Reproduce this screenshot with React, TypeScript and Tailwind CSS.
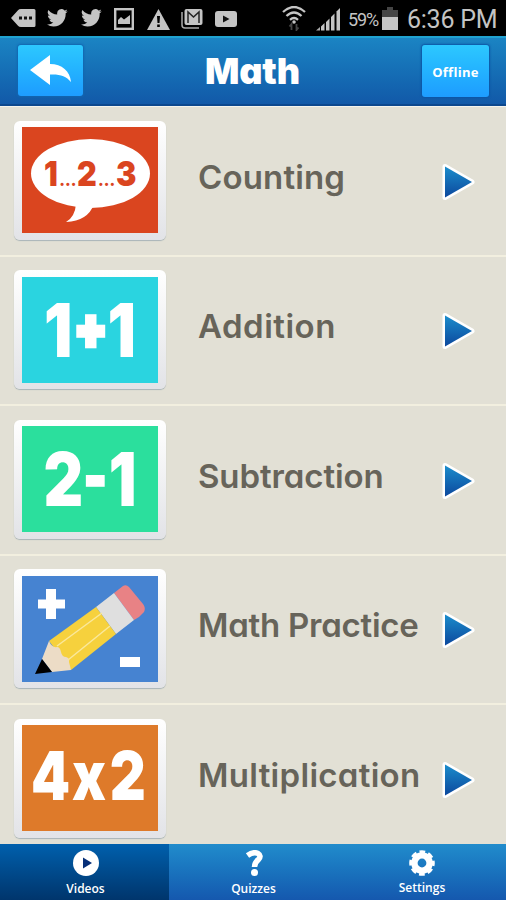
import type { ReactNode } from "react";

interface Lesson {
  title: string;
  tracking: string;
  art: ReactNode;
}

const TwitterIcon = () => (
  <svg width="21" height="18" viewBox="0 0 24 20" preserveAspectRatio="none">
    <path
      fill="#c4c4c4"
      d="M23.6 2.4a9.500 9.500 0 0 1-2.700.8 4.800 4.800 0 0 0 2.100-2.700 9.800 9.800 0 0 1-3 1.200A4.850 4.850 0 0 0 11.700 6 13.700 13.700 0 0 1 1.700 1a4.800 4.800 0 0 0 1.500 6.500 4.800 4.800 0 0 1-2.200-.6c0 2.300 1.600 4.300 3.900 4.800a4.900 4.900 0 0 1-2.200.1 4.850 4.850 0 0 0 4.500 3.300A9.700 9.700 0 0 1 0 17.200a13.700 13.700 0 0 0 7.500 2.200c9.100 0 14.300-7.700 13.800-14.600a9.800 9.800 0 0 0 2.300-2.400z"
    />
  </svg>
);

const StatusBar = () => (
  <div className="flex h-9 shrink-0 items-center bg-black pl-[11px] font-['Roboto',sans-serif] text-[#c4c4c4]">
    <svg width="25" height="18" viewBox="0 0 25 18">
      <path fill="#c4c4c4" d="M0 9 7 1.200Q8 0 10 0H23q1.500 0 1.500 1.500v15Q24.500 18 23 18H10q-2 0-3-1.200z" />
      <path fill="#111" d="M8 7.500h3v3H8zM13 7.500h3v3h-3zM18 7.500h3v3h-3z" />
    </svg>
    <div className="ml-[11px] flex gap-[13px]">
      <TwitterIcon />
      <TwitterIcon />
    </div>
    <svg className="mt-[1px] ml-[12px]" width="20" height="22" viewBox="0 0 20 22">
      <rect x="1.200" y="1.200" width="17.600" height="19.600" fill="none" stroke="#c4c4c4" strokeWidth="2.400" />
      <path fill="#c4c4c4" d="M4 16v-4l3-3 3 2.500L16 7v9z" />
    </svg>
    <svg className="mt-[2px] ml-[13px]" width="23" height="21" viewBox="0 0 23 21">
      <path fill="#c4c4c4" d="M11.500 0 23 21H0z" />
      <path fill="#000" d="M10 7h3l-.5 7h-2zM10.200 15.500h2.600V18h-2.600z" />
    </svg>
    <svg className="mt-[1px] ml-[11px]" width="22" height="20" viewBox="0 0 22 20">
      <path fill="none" stroke="#aaa" strokeWidth="1.500" d="M1 3v13q0 3 3 3h14" />
      <rect x="3.500" y="0" width="18" height="16" rx="2" fill="#c4c4c4" />
      <path fill="none" stroke="#222" strokeWidth="1.500" d="M7 14V3l5.500 5L18 3v11" />
    </svg>
    <svg className="mt-[1px] ml-[12px]" width="22" height="16" viewBox="0 0 22 16">
      <rect width="22" height="16" rx="3" fill="#c4c4c4" />
      <path fill="#111" d="m8 4.500 6.500 3.500L8 11.500z" />
    </svg>
    <svg className="ml-[45px]" width="24" height="25" viewBox="0 0 24 25" fill="none" stroke="#c4c4c4" strokeWidth="2.300">
      <path d="M1 6q11-10 22 0M4.500 10q7.500-7 15 0M8 13.800q4-3.600 8 0" />
      <circle cx="12" cy="16" r="1.800" fill="#c4c4c4" stroke="none" />
      <path stroke="#454545" strokeWidth="1.800" d="M9.500 24v-6l-2 2.500M14.500 18v6l2-2.500" />
    </svg>
    <svg className="mt-[2px] ml-[10px]" width="25" height="23" viewBox="0 0 25 23" fill="#c4c4c4">
      <path fill="#aaa" d="M0 22.500 4 19v3.500z" />
      <path d="M5 18.500 8.500 15v7.500H5zM10 14l3.500-3.500v12H10zM15 9l3.500-3.500v17H15z" />
      <path d="M20.500 3.500 24 0v22.500h-3.500z" />
    </svg>
    <span className="mt-[4px] ml-[7px] w-[32px] whitespace-nowrap text-[18px] leading-none tracking-[-1.1px]">59%</span>
    <svg className="ml-[2px]" width="16" height="23" viewBox="0 0 16 23">
      <path fill="#454545" d="M5 0h6v3h5v8H0V3h5z" />
      <path fill="#c4c4c4" d="M0 10h16v13H0z" />
    </svg>
    <span className="mt-[3px] ml-[9px] whitespace-nowrap text-[25px] leading-none tracking-[-0.25px]">6:36 PM</span>
  </div>
);

const Header = () => (
  <header className="flex h-[70px] shrink-0 items-center justify-between border-t-2 border-b-2 border-t-[#20a2d0] border-b-[#0c488e] bg-linear-to-b from-[#1b84c3] to-[#1259a8] pr-[17px] pl-[18px]">
    <button className="mb-[2px] flex h-[51px] w-[65px] items-center justify-center rounded-[3px] bg-linear-to-b from-[#2dc8ff] to-[#1e9cff] shadow-[0_0_2px_1px_#1266b0]">
      <svg width="41" height="30" viewBox="0 0 41 30" fill="#fff">
        <path d="M0 15 20 0v9c12 0 20 7 21 18-5-6-11-8-21-7.500V30z" />
      </svg>
    </button>
    <h1 className="mb-[1px] font-['Inter',sans-serif] text-[36px] leading-none font-black tracking-[-0.1px] text-white [font-feature-settings:'cv11']">
      Math
    </h1>
    <button className="flex h-[52px] w-[67px] items-center justify-center rounded-[3px] bg-linear-to-b from-[#2dc8ff] to-[#1e9cff] pt-[3px] font-['Open_Sans',sans-serif] text-[13px] font-bold tracking-[0.3px] text-white shadow-[0_0_2px_1px_#0c55a4]">
      Offline
    </button>
  </header>
);

const artText = "font-['Inter',sans-serif] font-black";

const CountingArt = () => (
  <svg className="bg-[#da451f]" width="136" height="106" viewBox="0 0 136 106">
    <ellipse cx="68.500" cy="46.500" rx="59.500" ry="34.500" fill="#fff" />
    <path fill="#fff" d="M54 77q-1 13-10 18 22-1 28-18z" />
    <g className={artText} fill="#da451f" fontSize="34" transform="translate(0 59) scale(.9 1)">
      <text x="24.500">1</text>
      <text x="41.500" fontSize="17">...</text>
      <text x="61">2</text>
      <text x="84.500" fontSize="17">...</text>
      <text x="104.500">3</text>
    </g>
  </svg>
);

const AdditionArt = () => (
  <svg className="bg-[#2ad4e0]" width="136" height="106" viewBox="0 0 136 106">
    <g className={artText} fill="#fff" fontSize="74" transform="translate(0 80) scale(.85 1)">
      <text x="26">1</text>
      <text x="61.500" y="-9" fontSize="56" stroke="#fff" strokeWidth="4.500">+</text>
      <text x="100.500">1</text>
    </g>
  </svg>
);

const SubtractionArt = () => (
  <svg className="bg-[#2bdf9d]" width="136" height="106" viewBox="0 0 136 106">
    <g className={artText} fill="#fff" fontSize="74" transform="translate(0 80) scale(.83 1)">
      <text x="26">2</text>
      <text x="75" y="-9.500" fontSize="56" stroke="#fff" strokeWidth="3.500">-</text>
      <text x="104.500">1</text>
    </g>
  </svg>
);

const PracticeArt = () => (
  <svg className="bg-[#4683d1]" width="136" height="106" viewBox="0 0 136 106">
    <path fill="#fff" d="M24 13h10v10.500h9v9h-9V43H24V32.500h-8v-9h8zM98 81h20v10H98z" />
    <path fill="#e88285" d="m92 17 9-7q3-2 6 1l14 17q3 4 1 8-4 5-10 8z" />
    <path fill="#dfdfdf" d="m74 31 18-14 20 27-18 14z" />
    <path fill="#f6d13d" d="m27 65 47-34 20 27-45 36z" />
    <path fill="#ecdcc6" d="M27 65q3 7 8 6 3 0 4 5 1 5 5 5 4 1 3 5l2 8-19 2-10-13z" />
    <path fill="none" stroke="#fae89b" strokeWidth="1.500" d="M35 70 80 37M46 84 88 50" />
    <path fill="#000" d="m20 83 10 13-17 2z" />
  </svg>
);

const MultiplicationArt = () => (
  <svg className="bg-[#de7a2a]" width="136" height="106" viewBox="0 0 136 106">
    <g className={artText} fill="#fff" fontSize="68" transform="translate(0 74.500) scale(.82 1)">
      <text x="11">4</text>
      <text x="61">x</text>
      <text x="107">2</text>
    </g>
  </svg>
);

const lessons: Lesson[] = [
  { title: "Counting", tracking: "tracking-[0.15px]", art: <CountingArt /> },
  { title: "Addition", tracking: "tracking-[0.5px]", art: <AdditionArt /> },
  { title: "Subtraction", tracking: "tracking-[-0.1px]", art: <SubtractionArt /> },
  { title: "Math Practice", tracking: "tracking-[-0.25px]", art: <PracticeArt /> },
  { title: "Multiplication", tracking: "tracking-[0.3px]", art: <MultiplicationArt /> },
];

const LessonRow = ({ title, tracking, art }: Lesson) => (
  <li className="flex h-[149.5px] shrink-0 items-start border-b-2 border-[#f2efdf] pt-[13.5px] pl-[14px]">
    <div className="flex h-[119px] w-[152px] justify-center rounded-[6px] bg-linear-to-b from-white to-[#e2e3e7] pt-[6.5px] shadow-[0_1px_1px_#a9b4b8]">
      {art}
    </div>
    <span
      className={`mt-[36px] ml-8 w-[246px] font-['Inter',sans-serif] text-[33px] leading-[40px] font-semibold whitespace-nowrap text-[#67645a] [font-feature-settings:'cv11'] ${tracking}`}
    >
      {title}
    </span>
    <svg className="mt-[41px] -ml-[2px]" width="35" height="40" viewBox="0 0 35 40">
      <defs>
        <linearGradient id="arrow" x1="0" y1="0" x2="0" y2="1">
          <stop offset="0" stopColor="#1b8dcc" />
          <stop offset="1" stopColor="#0c489d" />
        </linearGradient>
      </defs>
      <path
        d="M3 4.500v31L30 20z"
        fill="url(#arrow)"
        stroke="#fff"
        strokeWidth="5"
        strokeLinejoin="round"
        paintOrder="stroke"
      />
    </svg>
  </li>
);

const TabBar = () => (
  <nav className="flex h-14 shrink-0 bg-linear-to-b from-[#218ccc] to-[#1558ae] font-['Open_Sans',sans-serif] text-[12px] leading-none font-semibold text-white">
    <button className="flex w-[169px] flex-col items-center bg-linear-to-b from-[#0060ad] to-[#00356c] pt-[6px] pl-[2px]">
      <svg width="26" height="26" viewBox="0 0 26 26">
        <circle cx="13" cy="13" r="13" fill="#fff" />
        <path fill="#062f78" d="m10 7.500 9 5.500-9 5.500z" />
      </svg>
      <span className="mt-[7px]">Videos</span>
    </button>
    <button className="flex w-[169px] flex-col items-center pt-[6px]">
      <svg className="ml-[2px]" width="20" height="26" viewBox="0 0 20 26">
        <path fill="none" stroke="#fff" strokeWidth="5.500" d="M2.500 5.500Q8 1.500 12.500 3.200q4.500 2.800 1 6.300-4 3-4 7.500" />
        <circle cx="9.500" cy="22.500" r="3.500" fill="#fff" />
      </svg>
      <span className="mt-[7px]">Quizzes</span>
    </button>
    <button className="flex w-[168px] flex-col items-center pt-[6px]">
      <svg width="26" height="26" viewBox="0 0 26 26">
        <circle cx="13" cy="13" r="7.600" fill="none" stroke="#fff" strokeWidth="6.400" />
        <circle cx="13" cy="13" r="10.800" fill="none" stroke="#fff" strokeWidth="4" strokeDasharray="5.400 3.082" strokeDashoffset="2.700" />
      </svg>
      <span className="mt-[6px]">Settings</span>
    </button>
  </nav>
);

export default function App() {
  return (
    <div className="flex h-[900px] w-[506px] flex-col overflow-hidden bg-[#e2e0d5]">
      <StatusBar />
      <Header />
      <ul className="flex min-h-0 flex-1 flex-col overflow-hidden border-t border-[#f4f3ed]">
        {lessons.map((lesson) => (
          <LessonRow key={lesson.title} {...lesson} />
        ))}
      </ul>
      <TabBar />
    </div>
  );
}
